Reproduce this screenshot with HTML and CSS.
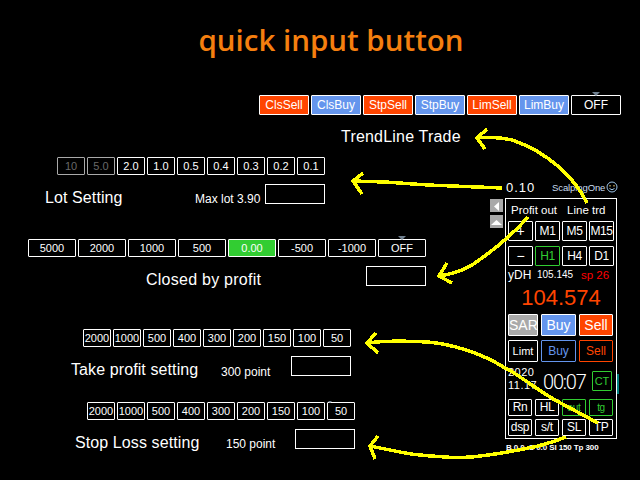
FILE: index.html
```html
<!DOCTYPE html>
<html lang="en">
<head>
<meta charset="utf-8">
<title>quick input button</title>
<link rel="stylesheet" href="styles.css">
</head>
<body>
<div class="page">
  <h1 class="title">quick input button</h1>
  <div class="toolbar">
    <button class="btn w50 sell">ClsSell</button>
    <button class="btn w50 buy">ClsBuy</button>
    <button class="btn w50 sell">StpSell</button>
    <button class="btn w50 buy">StpBuy</button>
    <button class="btn w50 sell">LimSell</button>
    <button class="btn w50 buy">LimBuy</button>
    <button class="btn w50 mark">OFF</button>
  </div>
  <div class="trend">TrendLine Trade</div>
  <div class="body">
    <div class="left">
      <div class="row lot-row">
        <button class="btn w28 dim">10</button><button class="btn w28 dim">5.0</button><button class="btn w28">2.0</button><button class="btn w28">1.0</button><button class="btn w28">0.5</button><button class="btn w28">0.4</button><button class="btn w28">0.3</button><button class="btn w28">0.2</button><button class="btn w28">0.1</button>
      </div>
      <div class="setting lot-set">
        <span class="label">Lot Setting</span><span class="note">Max lot 3.90</span><span class="box"></span>
      </div>
      <div class="row prof-row">
        <button class="btn w48">5000</button><button class="btn w48">2000</button><button class="btn w48">1000</button><button class="btn w48">500</button><button class="btn w48 green">0.00</button><button class="btn w48">-500</button><button class="btn w48">-1000</button><button class="btn w48 mark">OFF</button>
      </div>
      <div class="setting prof-set">
        <span class="label">Closed by profit</span><span class="box"></span>
      </div>
      <div class="row tp-row">
        <button class="btn w28">2000</button><button class="btn w28">1000</button><button class="btn w28">500</button><button class="btn w28">400</button><button class="btn w28">300</button><button class="btn w28">200</button><button class="btn w28">150</button><button class="btn w28">100</button><button class="btn w28">50</button>
      </div>
      <div class="setting tp-set">
        <span class="label">Take profit setting</span><span class="note">300 point</span><span class="box"></span>
      </div>
      <div class="row sl-row">
        <button class="btn w28">2000</button><button class="btn w28">1000</button><button class="btn w28">500</button><button class="btn w28">400</button><button class="btn w28">300</button><button class="btn w28">200</button><button class="btn w28">150</button><button class="btn w28">100</button><button class="btn w28 tick">50</button>
      </div>
      <div class="setting sl-set">
        <span class="label">Stop Loss setting</span><span class="note">150 point</span><span class="box"></span>
      </div>
    </div>
    <div class="side">
      <div class="side-head">
        <span class="lotval">0.10</span>
        <span class="brand">ScalpingOne</span>
        <svg class="smile" width="12" height="12" viewBox="0 0 12 12" fill="none" stroke="#9cc4e8">
          <circle cx="6" cy="6" r="5"/>
          <path d="M3.5 7.5 Q6 10 8.500 7.500"/>
          <path d="M4 4v1.500M8 4v1.500" stroke="#ffe080"/>
        </svg>
      </div>
      <div class="side-main">
        <div class="arrows">
          <span class="arrow-btn"><svg width="13" height="13" viewBox="0 0 13 13"><path d="M9 2v9L4 6.500z" fill="#fff"/></svg></span>
          <span class="arrow-btn"><svg width="13" height="13" viewBox="0 0 13 13"><path d="M1 9h11L6.500 4z" fill="#fff"/></svg></span>
        </div>
        <div class="panel">
          <div class="p-head"><span>Profit out</span><span>Line trd</span></div>
          <div class="p-grid">
            <button class="pbtn big">+</button><button class="pbtn">M1</button><button class="pbtn">M5</button><button class="pbtn">M15</button>
          </div>
          <div class="p-grid second">
            <button class="pbtn big">−</button><button class="pbtn on">H1</button><button class="pbtn">H4</button><button class="pbtn">D1</button>
          </div>
          <div class="p-info"><span class="ydh">yDH</span><span class="yval">105.145</span><span class="sp">sp 26</span></div>
          <div class="price">104.574</div>
          <div class="p-trade">
            <button class="tbtn sar">SAR</button><button class="tbtn tbuy">Buy</button><button class="tbtn tsell">Sell</button>
          </div>
          <div class="p-trade second-t">
            <button class="tbtn limt">Limt</button><button class="tbtn obuy">Buy</button><button class="tbtn osell">Sell</button>
          </div>
          <div class="p-time">
            <div class="date"><span>2020</span><span>11.17</span></div>
            <div class="clock">00:07</div>
            <button class="ct">CT</button>
          </div>
          <div class="p-small">
            <button class="sbtn">Rn</button><button class="sbtn">HL</button><button class="sbtn gr">aut</button><button class="sbtn gr">tg</button>
          </div>
          <div class="p-small second-s">
            <button class="sbtn">dsp</button><button class="sbtn">s/t</button><button class="sbtn">SL</button><button class="sbtn">TP</button>
          </div>
          <span class="teal"></span>
        </div>
        <div class="foot">B 0.0&nbsp; S 0.0 Sl 150 Tp 300</div>
      </div>
    </div>
  </div>
  <svg class="overlay" width="640" height="480" viewBox="0 0 640 480" fill="none" stroke="#ffff00" stroke-width="3.500" shape-rendering="crispEdges">
    <path d="M587 203C575 178 548 152 512 140C500 137 488 137 477 138"/>
    <path d="M487 129L477 138L485 149"/>
    <path d="M502 188L428 185L385 182L353 181"/>
    <path d="M363 173L353 181L362 194"/>
    <path d="M528 217C515 232 500 246 472 265C460 272 450 274 439 276"/>
    <path d="M447 263L439 276L452 283"/>
    <path d="M598 423L555 400C530 385 515 372 505 368C480 352 450 344 428 342C410 341 390 340 367 343"/>
    <path d="M376 333L367 343L378 353"/>
    <path d="M566 437C550 443 535 447 528 448C510 452 495 454 488 455C470 458 455 458 445 457C430 456 415 455 405 453L370 446"/>
    <path d="M378 436L370 446L375 459"/>
  </svg>
</div>
</body>
</html>
```

FILE: styles.css
```css
* { box-sizing: border-box; }
html, body { margin: 0; padding: 0; background: #000; }
body { font-family: "Liberation Sans", Arial, sans-serif; color: #fff; }
.page { position: relative; width: 640px; height: 480px; overflow: hidden; }
.title { margin: 0; padding-top: 22px; height: 95px; text-align: center; font-family: "Open Sans", "Liberation Sans", sans-serif; font-size: 29.500px; line-height: 36px; font-weight: 600; color: #f57f0f; padding-left: 22px; }

.btn { display: block; height: 18px; padding: 0; margin: 0; background: #000; border: 1px solid #fff; border-radius: 1px; color: #fff; font: 11px/16px "Liberation Sans", Arial, sans-serif; text-align: center; flex: none; position: relative; }
.w50 { width: 50px; height: 20px; line-height: 18px; font-size: 12px; }
.w48 { width: 48px; }
.w28 { width: 28px; }
.sell { background: #ff4500; }
.buy { background: #6495ed; }
.green { background: #32cd32; }
.dim { color: #696969; border-color: #a9a9a9; }
.mark::before { content: ""; position: absolute; left: 50%; top: -4px; margin-left: -4px; border: 4px solid transparent; border-top: 4px solid #708090; border-bottom: 0; }
.tick::before { content: ""; position: absolute; left: 0; top: -2px; border: 2px solid transparent; border-top: 2px solid #708090; border-bottom: 0; }

.toolbar { display: flex; gap: 2px; padding-left: 259px; height: 20px; }
.trend { padding-left: 341px; margin-top: 13px; height: 18px; font-size: 16px; line-height: 18px; letter-spacing: .2px; }
.body { display: flex; margin-top: 11px; }
.left { width: 490px; flex: none; }
.row { display: flex; gap: 2px; }
.setting { display: flex; align-items: flex-start; height: 20px; }
.label { font-size: 16px; line-height: 18px; flex: none; letter-spacing: .1px; }
.note { font-size: 12px; line-height: 14px; flex: none; }
.box { display: block; width: 60px; height: 20px; border: 1px solid #fff; flex: none; }

.lot-row { padding-left: 57px; }
.lot-set { padding-left: 45px; margin-top: 9px; }
.lot-set .label { width: 150px; margin-top: 5px; }
.lot-set .note { width: 70px; margin-top: 8px; }
.prof-row { padding-left: 28px; margin-top: 35px; }
.prof-set { padding-left: 146px; margin-top: 9px; }
.prof-set .label { width: 220px; margin-top: 5px; letter-spacing: .25px; }
.tp-row { padding-left: 83px; margin-top: 43px; }
.tp-set { padding-left: 71px; margin-top: 9px; }
.tp-set .label { width: 150px; margin-top: 5px; }
.tp-set .note { width: 70px; margin-top: 9px; }
.sl-row { padding-left: 87px; margin-top: 26px; }
.sl-set { padding-left: 75px; margin-top: 9px; }
.sl-set .label { width: 151px; margin-top: 5px; }
.sl-set .note { width: 69px; margin-top: 8px; }

.side { width: 150px; flex: none; }
.side-head { display: flex; align-items: center; height: 20px; margin-top: 20px; padding-left: 16px; }
.lotval { width: 46px; font-size: 13px; letter-spacing: 1px; }
.brand { width: 54px; font-size: 9.500px; letter-spacing: -.1px; color: #c8dcf0; }
.smile { flex: none; }
.side-main { position: relative; display: flex; flex-wrap: wrap; padding-top: 1px; }
.arrows { width: 15px; display: flex; flex-direction: column; gap: 3px; flex: none; padding-top: 1px; }
.arrow-btn { display: block; width: 13px; height: 13px; background: #a9a9a9; overflow: hidden; }
.panel { position: relative; width: 112px; height: 241px; border: 1px solid #fff; padding: 5px 2px 0; flex: none; }
.p-head { display: flex; gap: 10px; padding-left: 3px; font-size: 11.500px; line-height: 13px; height: 13px; margin-bottom: 4px; white-space: nowrap; }
.p-grid { display: flex; gap: 2px; }
.p-grid.second { margin-top: 5px; }
.pbtn { width: 25px; height: 20px; padding: 0; background: #000; color: #fff; border: 1px solid #fff; border-radius: 1px; font: 12px/18px "Liberation Sans", Arial, sans-serif; letter-spacing: -.4px; flex: none; }
.pbtn.big { font-size: 14px; }
.pbtn.on { color: #32cd32; border-color: #32cd32; }
.p-info { display: flex; height: 14px; margin-top: 2px; font-size: 11px; line-height: 14px; }
.ydh { width: 29px; font-size: 12px; }
.yval { width: 44px; font-size: 10px; }
.sp { color: #ff0000; font-size: 11.500px; white-space: nowrap; }
.price { height: 30px; padding-top: 2px; text-align: center; color: #ff4500; font-size: 22px; line-height: 28px; }
.p-trade { display: flex; gap: 3px; margin-top: 2px; }
.p-trade.second-t { margin-top: 4px; }
.tbtn { height: 22px; padding: 0; border: 1px solid #fff; border-radius: 1px; background: #000; color: #fff; font: 14px/20px "Liberation Sans", Arial, sans-serif; flex: none; overflow: hidden; }
.tbtn:nth-child(1) { width: 30px; }
.tbtn:nth-child(2) { width: 35px; }
.tbtn:nth-child(3) { width: 34px; }
.sar { background: #a9a9a9; }
.tbuy { background: #6495ed; }
.tsell { background: #ff4500; }
.limt { font-size: 11px; }
.tbtn.obuy { color: #6495ed; border-color: #6495ed; font-size: 12px; }
.tbtn.osell { color: #ff4500; border-color: #ff4500; font-size: 12px; }
.p-time { display: flex; height: 37px; position: relative; align-items: flex-start; }
.date { width: 35px; display: flex; flex-direction: column; font-size: 11px; line-height: 13px; letter-spacing: .5px; padding-top: 4px; white-space: nowrap; flex: none; }
.clock { width: 49px; font-family: Roboto, "Liberation Sans", sans-serif; font-weight: 300; font-size: 20px; letter-spacing: -1.200px; line-height: 22px; padding-top: 9px; flex: none; }
.ct { width: 20px; height: 20px; margin-top: 9px; padding: 0; background: #000; color: #32cd32; border: 1px solid #32cd32; border-radius: 1px; font: 11px/18px "Liberation Sans", Arial, sans-serif; flex: none; }
.p-small { display: flex; gap: 3px; }
.p-small.second-s { margin-top: 3px; gap: 3px; }
.sbtn { width: 24px; height: 17px; padding: 0; background: #000; color: #fff; border: 1px solid #fff; border-radius: 1px; font: 12px/15px "Liberation Sans", Arial, sans-serif; letter-spacing: -.3px; flex: none; }
.sbtn.gr { color: #32cd32; border-color: #32cd32; font-size: 10px; }
.teal { position: absolute; right: -3px; top: 175px; width: 2px; height: 20px; background: #008080; }
.foot { width: 135px; margin-top: 3px; font-size: 8px; font-weight: 700; letter-spacing: -.1px; line-height: 12px; white-space: nowrap; padding-left: 16px; }
.overlay { position: absolute; left: 0; top: 0; pointer-events: none; }
```
